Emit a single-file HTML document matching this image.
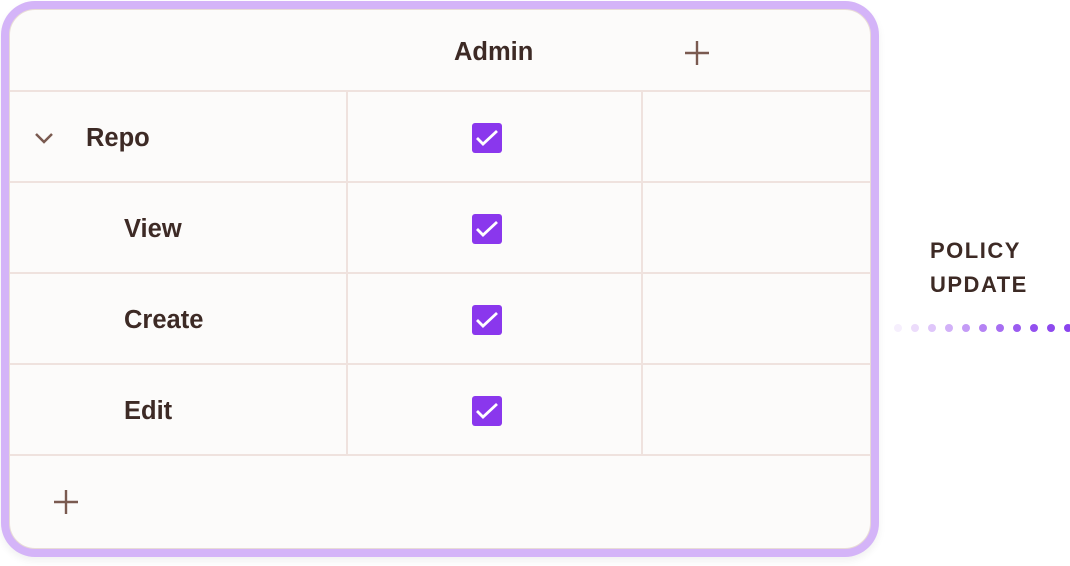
<!DOCTYPE html>
<html><head><style>
*{margin:0;padding:0;box-sizing:border-box}
body{width:1070px;height:566px;background:#fff;position:relative;overflow:hidden;font-family:"Liberation Sans",sans-serif;color:#3d2a25}
.card{position:absolute;left:1px;top:1px;width:878px;height:556px;border-radius:34px;background:#d4b4f8;box-shadow:0 4px 8px rgba(0,0,0,0.06)}
.inner{position:absolute;left:8px;top:8px;width:862px;height:540px;border-radius:26px;background:#fcfbfa;border:1.5px solid #e8dcd6;overflow:hidden}
.h{position:absolute;left:0;right:0;height:2px;background:#efe2de}
.v{position:absolute;width:2px;top:80px;height:364px;background:#efe2de}
.t{position:absolute;font-weight:bold;font-size:25.5px;line-height:30px}
.cb{position:absolute;left:462px;width:30px;height:30px;border-radius:3px;background:#8a37ed}
.lbl{position:absolute;left:930px;font-size:22px;font-weight:bold;letter-spacing:1.5px;line-height:34px;color:#3d2a25}
.dot{position:absolute;top:324px;width:8px;height:8px;border-radius:50%}
</style></head><body>
<div class="card"><div class="inner">
<div class="h" style="top:80px"></div>
<div class="h" style="top:171px"></div>
<div class="h" style="top:262px"></div>
<div class="h" style="top:353px"></div>
<div class="h" style="top:444px"></div>
<div class="v" style="left:336px"></div>
<div class="v" style="left:631px"></div>
<div class="t" style="left:444px;top:27px">Admin</div>
<svg style="position:absolute;left:674px;top:30px" width="26" height="26"><path d="M13 1V25M1 13H25" stroke="#7a5a50" stroke-width="2.4"/></svg>
<svg style="position:absolute;left:24px;top:121px" width="20" height="14"><path d="M2 3L10 11L18 3" stroke="#7a5a50" stroke-width="2.5" fill="none"/></svg>
<div class="t" style="left:76px;top:113px">Repo</div>
<div class="t" style="left:114px;top:204px">View</div>
<div class="t" style="left:114px;top:295px">Create</div>
<div class="t" style="left:114px;top:386px">Edit</div>
<div class="cb" style="top:113px"><svg width="30" height="30"><path d="M5 15L11 21L25 8" stroke="#fff" stroke-width="2.8" fill="none"/></svg></div>
<div class="cb" style="top:204px"><svg width="30" height="30"><path d="M5 15L11 21L25 8" stroke="#fff" stroke-width="2.8" fill="none"/></svg></div>
<div class="cb" style="top:295px"><svg width="30" height="30"><path d="M5 15L11 21L25 8" stroke="#fff" stroke-width="2.8" fill="none"/></svg></div>
<div class="cb" style="top:386px"><svg width="30" height="30"><path d="M5 15L11 21L25 8" stroke="#fff" stroke-width="2.8" fill="none"/></svg></div>
<svg style="position:absolute;left:43px;top:479px" width="26" height="26"><path d="M13 1V25M1 13H25" stroke="#7a5a50" stroke-width="2.4"/></svg>
</div></div>
<div class="lbl" style="top:234px">POLICY<br>UPDATE</div>
<div class="dot" style="left:894px;background:#f6effd"></div>
<div class="dot" style="left:911px;background:#ecdcfb"></div>
<div class="dot" style="left:928px;background:#dfc6fa"></div>
<div class="dot" style="left:945px;background:#d2b1f8"></div>
<div class="dot" style="left:962px;background:#c49bf6"></div>
<div class="dot" style="left:979px;background:#b583f4"></div>
<div class="dot" style="left:996px;background:#a76ef2"></div>
<div class="dot" style="left:1013px;background:#9b5cf0"></div>
<div class="dot" style="left:1030px;background:#9350ef"></div>
<div class="dot" style="left:1047px;background:#8e49ee"></div>
<div class="dot" style="left:1064px;background:#8a44ee"></div>
</body></html>
